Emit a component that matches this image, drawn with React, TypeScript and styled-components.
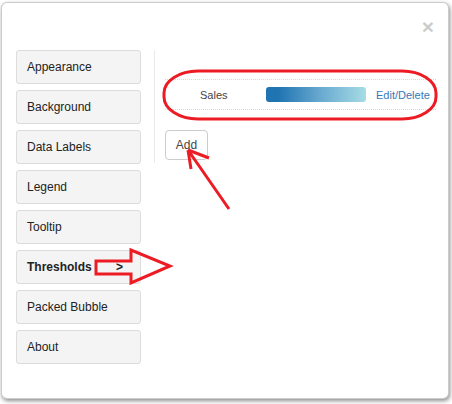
import React from "react";
import styled, { createGlobalStyle } from "styled-components";

const Global = createGlobalStyle`
  html, body { margin: 0; padding: 0; background: #ffffff; }
  body { font-family: "Liberation Sans", Arial, sans-serif; }
  * { box-sizing: border-box; }
`;

const Stage = styled.div`
  position: relative;
  width: 452px;
  height: 404px;
  padding: 2px 3px 0 1px;
`;

const Modal = styled.div`
  width: 448px;
  height: 397px;
  background: #fff;
  border: 1px solid rgba(0, 0, 0, 0.2);
  border-radius: 6px;
  box-shadow: 1px 2px 4px rgba(0, 0, 0, 0.45);
  display: flex;
  flex-direction: column;
`;

const Header = styled.div`
  height: 47px;
  display: flex;
  justify-content: flex-end;
  align-items: flex-start;
  padding: 13px 14px 0 0;
`;

const Close = styled.button`
  border: 0;
  background: none;
  padding: 0;
  font-family: "Liberation Sans", Arial, sans-serif;
  font-size: 21px;
  font-weight: bold;
  line-height: 21px;
  color: #000;
  opacity: 0.2;
`;

const Body = styled.div`
  display: flex;
  align-items: flex-start;
  padding: 0 14px;
`;

const Sidebar = styled.div`
  width: 125px;
  flex-shrink: 0;
  display: flex;
  flex-direction: column;
  gap: 6px;
`;

const NavButton = styled.div<{ $active?: boolean }>`
  height: 34px;
  border: 1px solid #dcdcdc;
  border-radius: 3px;
  background: #f4f4f4;
  display: flex;
  align-items: center;
  justify-content: space-between;
  padding: 0 17px 0 10px;
  font-size: 12px;
  color: #222;
  font-weight: ${(p) => (p.$active ? "bold" : "normal")};
`;

const Content = styled.div`
  flex: 1;
  margin-left: 13px;
  border-left: 1px solid #eaeaea;
  padding: 29px 0 3px 10px;
  height: 113px;
`;

const Row = styled.div`
  width: 271px;
  height: 31px;
  border-top: 1px dotted #d8d8d8;
  border-bottom: 1px dotted #d8d8d8;
  display: flex;
  align-items: center;
`;

const Name = styled.div`
  width: 101px;
  padding-left: 35px;
  font-size: 11px;
  color: #444;
`;

const Bar = styled.div`
  width: 100px;
  height: 15px;
  border-radius: 3px;
  background: linear-gradient(to right, #1f74b1 12%, #6aaad0 55%, #a6dce6);
`;

const Link = styled.a`
  margin-left: 10px;
  font-size: 11px;
  color: #337ab7;
  text-decoration: none;
`;

const AddButton = styled.button`
  margin-top: 20px;
  width: 43px;
  height: 30px;
  border: 1px solid #ccc;
  border-radius: 4px;
  background: #fff;
  font-family: "Liberation Sans", Arial, sans-serif;
  font-size: 12px;
  color: #444;
  padding: 0;
`;

const Overlay = styled.svg`
  position: absolute;
  left: 0;
  top: 0;
  pointer-events: none;
`;

const items = [
  "Appearance",
  "Background",
  "Data Labels",
  "Legend",
  "Tooltip",
  "Thresholds",
  "Packed Bubble",
  "About",
];

export default function App() {
  return (
    <Stage>
      <Global />
      <Modal>
        <Header>
          <Close>×</Close>
        </Header>
        <Body>
          <Sidebar>
            {items.map((it) => (
              <NavButton key={it} $active={it === "Thresholds"}>
                <span>{it}</span>
                {it === "Thresholds" && <span>&gt;</span>}
              </NavButton>
            ))}
          </Sidebar>
          <Content>
            <Row>
              <Name>Sales</Name>
              <Bar />
              <Link>Edit/Delete</Link>
            </Row>
            <AddButton>Add</AddButton>
          </Content>
        </Body>
      </Modal>
      <Overlay width="452" height="404" viewBox="0 0 452 404">
        <g fill="none" stroke="#ed1c24" strokeWidth="3" strokeLinejoin="miter">
          <rect x="164" y="71" width="272" height="48" rx="34" ry="22" />
          <path d="M229 209 L188 150 M188 150 L209 158 M188 150 L191 169" />
          <path d="M96 261 L131 261 L131 250 L170 266 L131 283 L131 274 L96 274 Z" />
        </g>
      </Overlay>
    </Stage>
  );
}
